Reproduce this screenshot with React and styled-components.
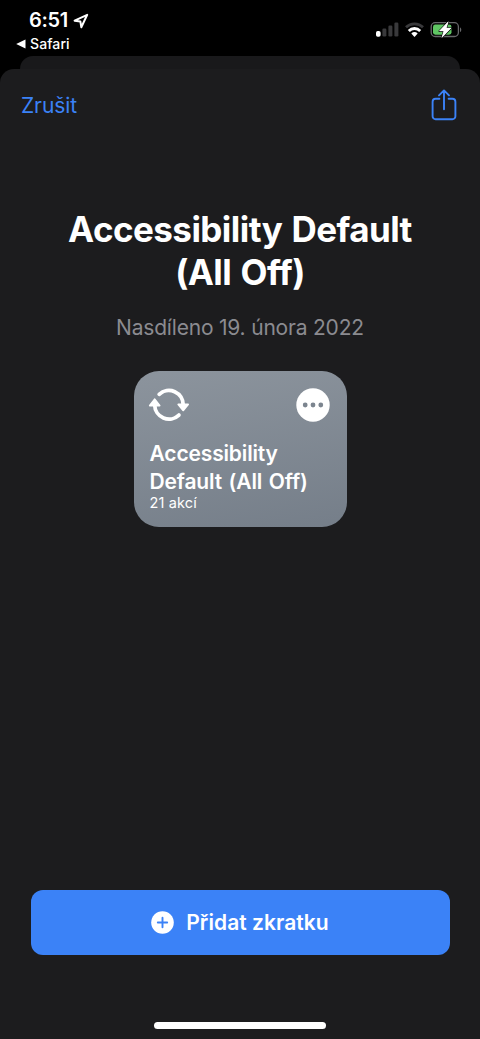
import React from "react";
import styled, { createGlobalStyle } from "styled-components";

const GlobalStyle = createGlobalStyle`
  * { box-sizing: border-box; }
  body {
    margin: 0;
    background: #000;
    color: #fff;
    font-family: Inter, "Liberation Sans", sans-serif;
  }
  button { font-family: inherit; border: 0; margin: 0; padding: 0; background: none; color: inherit; }
  svg { display: block; flex: none; }
`;

const Screen = styled.div`
  width: 480px;
  height: 1039px;
  display: flex;
  flex-direction: column;
  overflow: hidden;
  background: #000;
`;

const StatusBar = styled.header`
  flex: none;
  height: 56px;
  display: flex;
  justify-content: space-between;
  padding: 8px 18px 0 16px;
`;

const StatusLeft = styled.div`
  display: flex;
  flex-direction: column;
`;

const ClockRow = styled.div`
  display: flex;
  align-items: center;
  gap: 5px;
  height: 25px;
  padding-left: 13px;
`;

const Clock = styled.span`
  font-size: 20px;
  line-height: 25px;
  font-weight: 600;
  letter-spacing: -0.3px;
`;

const BackLink = styled.div`
  display: flex;
  align-items: center;
  gap: 4px;
  height: 21px;
  font-size: 14px;
  line-height: 21px;
  font-weight: 500;
  letter-spacing: 0.1px;
`;

const StatusIcons = styled.div`
  display: flex;
  align-items: flex-start;
  padding-top: 12px;
`;

const BackSheet = styled.div`
  flex: none;
  height: 13px;
  margin: 0 20px;
  background: #19191b;
  border-radius: 13px 13px 0 0;
`;

const Sheet = styled.main`
  flex: 1;
  display: flex;
  flex-direction: column;
  align-items: center;
  background: #1c1c1e;
  border-radius: 14px 14px 0 0;
`;

const NavBar = styled.nav`
  width: 100%;
  height: 72px;
  display: flex;
  justify-content: space-between;
  align-items: center;
  padding: 0 23px 0 21px;
  color: #3b82f7;
`;

const CancelButton = styled.button`
  padding-top: 2px;
  font-size: 21px;
  line-height: 26px;
  letter-spacing: -0.1px;
`;

const Title = styled.h1`
  margin: 67px 0 0;
  text-align: center;
  font-size: 35px;
  line-height: 43px;
  font-weight: 700;
  letter-spacing: -0.55px;
  word-spacing: 1.5px;
`;

const Subtitle = styled.p`
  margin: 20px 0 0;
  font-size: 21px;
  line-height: 28px;
  letter-spacing: -0.2px;
  color: #8b8b90;
`;

const Card = styled.article`
  width: 213px;
  height: 156px;
  margin-top: 29px;
  padding: 17px 17px 0 16px;
  border-radius: 25px;
  background: linear-gradient(170deg, #8c949d, #757e89);
`;

const CardIcons = styled.div`
  display: flex;
  justify-content: space-between;
  align-items: center;
  height: 34px;
  margin-left: -2px;
`;

const CardTitle = styled.h2`
  margin: 18px 0 0;
  font-size: 21px;
  line-height: 28px;
  font-weight: 600;
  letter-spacing: -0.15px;
  word-spacing: 1.5px;
  white-space: nowrap;
`;

const CardCount = styled.p`
  margin: -2px 0 0;
  font-size: 14.5px;
  line-height: 18px;
  letter-spacing: 0.15px;
`;

const Spacer = styled.div`
  flex: 1;
`;

const AddButton = styled.button`
  width: 419px;
  height: 65px;
  display: flex;
  align-items: center;
  justify-content: center;
  gap: 12px;
  border-radius: 12px;
  background: #3b82f7;
  font-size: 21px;
  font-weight: 600;
  letter-spacing: 0.05px;
`;

const HomeIndicator = styled.div`
  width: 172px;
  height: 7px;
  margin: 67px 0 10px;
  border-radius: 4px;
  background: #fff;
`;

const LocationIcon = () => (
  <svg width="16" height="16" viewBox="0 0 16 16" fill="none" stroke="#fff" strokeWidth="2" strokeLinejoin="round">
    <path d="M14.2 1.8 1.6 7.7l5.8.9.9 5.6z" />
  </svg>
);

const BackTriangle = () => (
  <svg width="10" height="10" viewBox="0 0 10 10">
    <path d="M.2 5 9.5.6v8.8z" fill="#fff" />
  </svg>
);

const StatusGlyphs = () => (
  <svg width="88" height="20" viewBox="0 0 88 20">
    <g fill="#39393b">
      <rect x="8.4" y="8.5" width="4" height="8" rx="1.3" />
      <rect x="14.4" y="5.5" width="4" height="11" rx="1.3" />
      <rect x="20.4" y="2.5" width="4" height="14" rx="1.3" />
    </g>
    <rect x="2" y="11" width="4.6" height="5.7" rx="1.7" fill="#fff" />
    <g fill="none" strokeWidth="2.8">
      <path d="M32 7.2a12.3 12.3 0 0 1 17 0" stroke="#39393b" />
      <path d="M34.8 10.9a8 8 0 0 1 11.4 0" stroke="#fff" />
    </g>
    <path d="M37.3 13.6a4.7 4.7 0 0 1 6.4 0L40.5 17z" fill="#fff" />
    <rect x="57.2" y="2.7" width="27.2" height="13.8" rx="4" fill="none" stroke="#68686b" strokeWidth="1.3" />
    <path d="M86 7.4c1.7.6 1.7 4 0 4.6z" fill="#68686b" />
    <rect x="59" y="4.5" width="18.5" height="10.2" rx="2.4" fill="#5fc563" />
    <path d="M74.2 1.8 65.4 11h4.5l-2 6.4 9.2-9.3h-4.9z" fill="#fff" stroke="#000" strokeWidth="1.8" paintOrder="stroke" strokeLinejoin="round" />
    <path d="M74.2 1.8 65.4 11h4.5l-2 6.4 9.2-9.3h-4.9z" fill="#fff" stroke="#fff" strokeWidth=".5" strokeLinejoin="round" />
  </svg>
);

const ShareIcon = () => (
  <svg width="26" height="32" viewBox="0 0 26 32" fill="none" stroke="currentColor" strokeWidth="1.9" strokeLinecap="round" strokeLinejoin="round">
    <path d="M8.4 9.8H4.6a3 3 0 0 0-3 3v14.5a3 3 0 0 0 3 3h16.8a3 3 0 0 0 3-3V12.8a3 3 0 0 0-3-3h-3.8M13 20.3V1.6M8 6.4l5-5 5 5" />
  </svg>
);

const CycleIcon = () => (
  <svg width="42" height="34" viewBox="-2 0 42 34" fill="none" stroke="#fff" strokeWidth="3.8" strokeLinecap="round">
    <path d="M9.2 6.3A14.3 14.3 0 0 1 33.2 17" />
    <path d="M28.9 27.1A14.3 14.3 0 0 1 4.7 17" />
    <g fill="#fff" strokeWidth="1.8" strokeLinejoin="round">
      <path d="M28.3 16.4h9.8L33.2 22.3z" />
      <path d="M-.2 17.6h9.8L4.7 11.3z" />
    </g>
  </svg>
);

const MoreIcon = () => (
  <svg width="34" height="34" viewBox="0 0 34 34">
    <circle cx="17" cy="17" r="16.7" fill="#fff" />
    <g fill="#7c858f">
      <circle cx="9.2" cy="17" r="2.4" />
      <circle cx="17" cy="17" r="2.4" />
      <circle cx="24.8" cy="17" r="2.4" />
    </g>
  </svg>
);

const PlusIcon = () => (
  <svg width="23" height="23" viewBox="0 0 23 23">
    <circle cx="11.5" cy="11.5" r="11.3" fill="#fff" />
    <path d="M11.5 6.8v9.4M6.8 11.5h9.4" stroke="#3b82f7" strokeWidth="1.9" strokeLinecap="round" />
  </svg>
);

export default function App() {
  return (
    <>
      <GlobalStyle />
      <Screen>
        <StatusBar>
          <StatusLeft>
            <ClockRow>
              <Clock>6:51</Clock>
              <LocationIcon />
            </ClockRow>
            <BackLink>
              <BackTriangle />
              <span>Safari</span>
            </BackLink>
          </StatusLeft>
          <StatusIcons>
            <StatusGlyphs />
          </StatusIcons>
        </StatusBar>
        <BackSheet />
        <Sheet>
          <NavBar>
            <CancelButton>Zrušit</CancelButton>
            <ShareIcon />
          </NavBar>
          <Title>
            Accessibility Default
            <br />
            (All Off)
          </Title>
          <Subtitle>Nasdíleno 19. února 2022</Subtitle>
          <Card>
            <CardIcons>
              <CycleIcon />
              <MoreIcon />
            </CardIcons>
            <CardTitle>
              Accessibility
              <br />
              Default (All Off)
            </CardTitle>
            <CardCount>21 akcí</CardCount>
          </Card>
          <Spacer />
          <AddButton>
            <PlusIcon />
            <span>Přidat zkratku</span>
          </AddButton>
          <HomeIndicator />
        </Sheet>
      </Screen>
    </>
  );
}
